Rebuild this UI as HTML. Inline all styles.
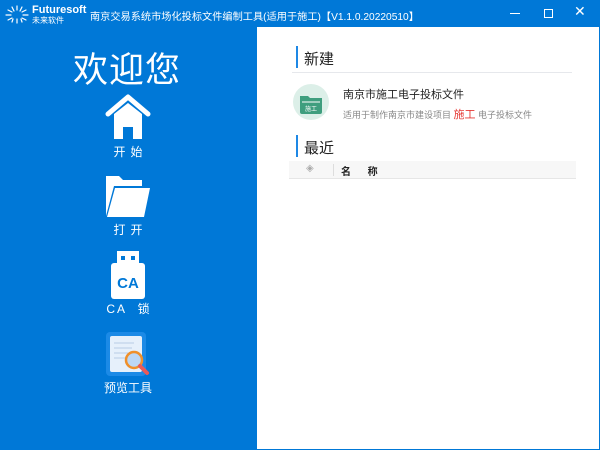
<!DOCTYPE html>
<html><head><meta charset="utf-8"><style>
*{margin:0;padding:0;box-sizing:border-box}
body{width:600px;height:450px;background:#0078d7;position:relative;overflow:hidden;font-family:"Liberation Sans","Noto Sans CJK SC",sans-serif}
.abs{position:absolute}
.title{left:90px;top:8px;color:#fff;font-size:10.2px;white-space:nowrap}
.panel{left:257px;top:27px;width:342px;height:422px;background:#fff}
.lbl{color:#fff;font-size:12px;text-align:center;width:80px;left:88px;letter-spacing:5px;text-indent:5px}
</style></head><body>
<svg class="abs" style="left:4px;top:4px" width="26" height="20" viewBox="0 0 26 20">
<g stroke="#fff" stroke-width="1.2" stroke-linecap="round">
<line x1="13" y1="2" x2="13" y2="6"/><line x1="8" y1="3" x2="10" y2="7"/><line x1="18" y1="3" x2="16" y2="7"/>
<line x1="4" y1="6" x2="8" y2="8"/><line x1="22" y1="6" x2="18" y2="8"/><line x1="2" y1="11" x2="7" y2="11"/><line x1="24" y1="11" x2="19" y2="11"/>
<line x1="4" y1="16" x2="8" y2="14"/><line x1="22" y1="16" x2="18" y2="14"/><line x1="13" y1="15" x2="13" y2="19"/><line x1="9" y1="15" x2="8" y2="18"/><line x1="17" y1="15" x2="18" y2="18"/>
</g></svg>
<div class="abs" style="left:32px;top:4px;color:#fff;font-size:11px;font-weight:bold">Futuresoft</div>
<div class="abs" style="left:32px;top:15px;color:#fff;font-size:8px">未来软件</div>
<div class="abs title">南京交易系统市场化投标文件编制工具(适用于施工)【V1.1.0.20220510】</div>
<div class="abs" style="left:510px;top:13px;width:10px;height:1px;background:#fff"></div>
<div class="abs" style="left:544px;top:9px;width:9px;height:9px;border:1px solid #fff"></div>
<div class="abs" style="left:574px;top:3px;color:#fff;font-size:14px">✕</div>

<div class="abs" style="left:73px;top:42px;color:#fff;font-size:35px;letter-spacing:1px">欢迎您</div>
<svg class="abs" style="left:104px;top:94px" width="48" height="46" viewBox="0 0 48 46">
<path d="M4 20 L24 3 L44 20" fill="none" stroke="#fff" stroke-width="5" stroke-linecap="round" stroke-linejoin="round"/>
<path d="M10 20 L24 9 L38 20 V45 H29 V33 H19 V45 H10 Z" fill="#fff"/>
</svg>
<div class="abs lbl" style="top:143px">开始</div>
<svg class="abs" style="left:104px;top:174px" width="48" height="44" viewBox="0 0 48 44">
<path d="M2 2 H15 L19 6 H38 V12 H10 L2 42 Z" fill="#fff"/>
<path d="M11 14 H46 L40 43 H3 Z" fill="#fff"/>
</svg>
<div class="abs lbl" style="top:221px">打开</div>
<svg class="abs" style="left:108px;top:251px" width="40" height="48" viewBox="0 0 40 48">
<rect x="9" y="0" width="22" height="13" fill="#fff"/><rect x="13" y="5" width="4" height="4" fill="#0078d7"/><rect x="23" y="5" width="4" height="4" fill="#0078d7"/>
<rect x="3" y="12" width="34" height="36" rx="3" fill="#fff"/>
<text x="20" y="37" fill="#0078d7" font-size="15" font-weight="bold" text-anchor="middle" font-family="Liberation Sans">CA</text>
</svg>
<div class="abs lbl" style="top:300px;letter-spacing:2px;text-indent:2px">CA&nbsp;&nbsp;锁</div>
<svg class="abs" style="left:104px;top:330px" width="52" height="48" viewBox="0 0 52 48">
<rect x="2" y="2" width="40" height="44" rx="4" fill="#1c8ae6"/>
<rect x="6" y="6" width="32" height="36" rx="2" fill="#e6f0fb"/>
<g stroke="#b8cde6" stroke-width="1"><line x1="10" y1="13" x2="30" y2="13"/><line x1="10" y1="18" x2="28" y2="18"/><line x1="10" y1="23" x2="24" y2="23"/><line x1="10" y1="28" x2="22" y2="28"/></g>
<circle cx="30" cy="30" r="8" fill="#bcd7f5" stroke="#f0902a" stroke-width="2.5"/>
<line x1="36" y1="36" x2="43" y2="43" stroke="#e85a5a" stroke-width="4" stroke-linecap="round"/>
</svg>
<div class="abs lbl" style="top:379px;letter-spacing:0;text-indent:0">预览工具</div>

<div class="abs panel"></div>
<div class="abs" style="left:296px;top:46px;width:2px;height:22px;background:#1e88e5"></div>
<div class="abs" style="left:304px;top:48px;font-size:15px;color:#222">新建</div>
<div class="abs" style="left:292px;top:72px;width:280px;height:1px;background:#e6e8ec"></div>
<svg class="abs" style="left:293px;top:84px" width="36" height="36" viewBox="0 0 36 36">
<circle cx="18" cy="18" r="18" fill="#dcefe8"/>
<path d="M7 12 H15 L17 14 H29 V28 a2 2 0 0 1 -2 2 H9 a2 2 0 0 1 -2 -2 Z" fill="#3f9e7e"/>
<line x1="9" y1="18" x2="27" y2="18" stroke="#fff" stroke-width="1"/>
<text x="18" y="27" fill="#fff" font-size="6" text-anchor="middle">施工</text>
</svg>
<div class="abs" style="left:343px;top:86px;font-size:11px;color:#222">南京市施工电子投标文件</div>
<div class="abs" style="left:343px;top:106px;font-size:9px;color:#888;white-space:nowrap">适用于制作南京市建设项目 <span style="color:#e53935;font-size:11px">施工</span> 电子投标文件</div>
<div class="abs" style="left:296px;top:135px;width:2px;height:22px;background:#1e88e5"></div>
<div class="abs" style="left:304px;top:137px;font-size:15px;color:#222">最近</div>
<div class="abs" style="left:289px;top:161px;width:287px;height:18px;background:#f7f7f7;border-bottom:1px solid #e6e6e6"></div>
<div class="abs" style="left:306px;top:163px;font-size:10px;color:#aaa">◈</div>
<div class="abs" style="left:333px;top:164px;width:1px;height:12px;background:#ddd"></div>
<div class="abs" style="left:341px;top:163px;font-size:10px;color:#222;font-weight:bold">名&nbsp;&nbsp;&nbsp;&nbsp;&nbsp;&nbsp;称</div>
</body></html>
